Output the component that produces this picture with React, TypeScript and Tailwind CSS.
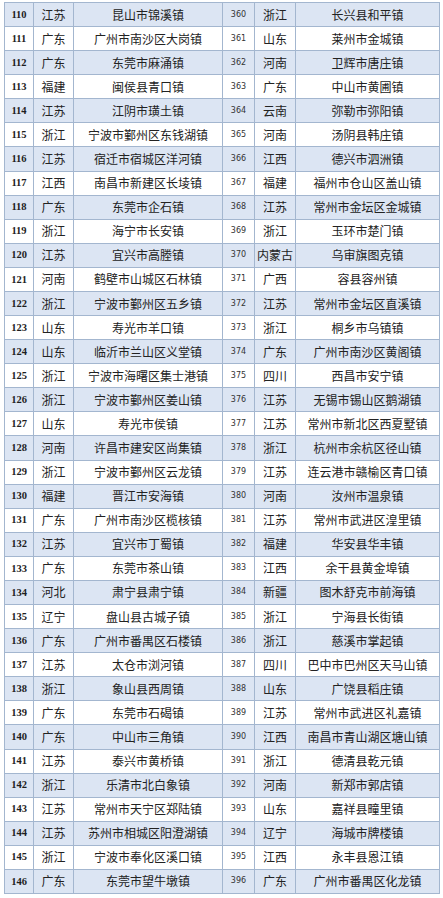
const LEFT: [string, string, string][] = [
  ["110", "江苏", "昆山市锦溪镇"],
  ["111", "广东", "广州市南沙区大岗镇"],
  ["112", "广东", "东莞市麻涌镇"],
  ["113", "福建", "闽侯县青口镇"],
  ["114", "江苏", "江阴市璜土镇"],
  ["115", "浙江", "宁波市鄞州区东钱湖镇"],
  ["116", "江苏", "宿迁市宿城区洋河镇"],
  ["117", "江西", "南昌市新建区长堎镇"],
  ["118", "广东", "东莞市企石镇"],
  ["119", "浙江", "海宁市长安镇"],
  ["120", "江苏", "宜兴市高塍镇"],
  ["121", "河南", "鹤壁市山城区石林镇"],
  ["122", "浙江", "宁波市鄞州区五乡镇"],
  ["123", "山东", "寿光市羊口镇"],
  ["124", "山东", "临沂市兰山区义堂镇"],
  ["125", "浙江", "宁波市海曙区集士港镇"],
  ["126", "浙江", "宁波市鄞州区姜山镇"],
  ["127", "山东", "寿光市侯镇"],
  ["128", "河南", "许昌市建安区尚集镇"],
  ["129", "浙江", "宁波市鄞州区云龙镇"],
  ["130", "福建", "晋江市安海镇"],
  ["131", "广东", "广州市南沙区榄核镇"],
  ["132", "江苏", "宜兴市丁蜀镇"],
  ["133", "广东", "东莞市茶山镇"],
  ["134", "河北", "肃宁县肃宁镇"],
  ["135", "辽宁", "盘山县古城子镇"],
  ["136", "广东", "广州市番禺区石楼镇"],
  ["137", "江苏", "太仓市浏河镇"],
  ["138", "浙江", "象山县西周镇"],
  ["139", "广东", "东莞市石碣镇"],
  ["140", "广东", "中山市三角镇"],
  ["141", "江苏", "泰兴市黄桥镇"],
  ["142", "浙江", "乐清市北白象镇"],
  ["143", "江苏", "常州市天宁区郑陆镇"],
  ["144", "江苏", "苏州市相城区阳澄湖镇"],
  ["145", "浙江", "宁波市奉化区溪口镇"],
  ["146", "广东", "东莞市望牛墩镇"],
];

const RIGHT: [string, string, string][] = [
  ["360", "浙江", "长兴县和平镇"],
  ["361", "山东", "莱州市金城镇"],
  ["362", "河南", "卫辉市唐庄镇"],
  ["363", "广东", "中山市黄圃镇"],
  ["364", "云南", "弥勒市弥阳镇"],
  ["365", "河南", "汤阴县韩庄镇"],
  ["366", "江西", "德兴市泗洲镇"],
  ["367", "福建", "福州市仓山区盖山镇"],
  ["368", "江苏", "常州市金坛区金城镇"],
  ["369", "浙江", "玉环市楚门镇"],
  ["370", "内蒙古", "乌审旗图克镇"],
  ["371", "广西", "容县容州镇"],
  ["372", "江苏", "常州市金坛区直溪镇"],
  ["373", "浙江", "桐乡市乌镇镇"],
  ["374", "广东", "广州市南沙区黄阁镇"],
  ["375", "四川", "西昌市安宁镇"],
  ["376", "江苏", "无锡市锡山区鹅湖镇"],
  ["377", "江苏", "常州市新北区西夏墅镇"],
  ["378", "浙江", "杭州市余杭区径山镇"],
  ["379", "江苏", "连云港市赣榆区青口镇"],
  ["380", "河南", "汝州市温泉镇"],
  ["381", "江苏", "常州市武进区湟里镇"],
  ["382", "福建", "华安县华丰镇"],
  ["383", "江西", "余干县黄金埠镇"],
  ["384", "新疆", "图木舒克市前海镇"],
  ["385", "浙江", "宁海县长街镇"],
  ["386", "浙江", "慈溪市掌起镇"],
  ["387", "四川", "巴中市巴州区天马山镇"],
  ["388", "山东", "广饶县稻庄镇"],
  ["389", "江苏", "常州市武进区礼嘉镇"],
  ["390", "江西", "南昌市青山湖区塘山镇"],
  ["391", "浙江", "德清县乾元镇"],
  ["392", "河南", "新郑市郭店镇"],
  ["393", "山东", "嘉祥县疃里镇"],
  ["394", "辽宁", "海城市牌楼镇"],
  ["395", "江西", "永丰县恩江镇"],
  ["396", "广东", "广州市番禺区化龙镇"],
];

const CJK = "font-['Noto_Sans_CJK_SC',sans-serif]";

export default function App() {
  return (
    <div className="min-h-[898px] bg-white pl-[4px] pt-[2px]">
      <div className="grid h-[892px] w-[436px] grid-cols-[28px_39px_148px_31px_40px_143px] grid-rows-[repeat(37,minmax(0,1fr))] gap-px bg-[#a3b6cf] p-px">
        {LEFT.map((l, i) => {
          const r = RIGHT[i];
          const bg = i % 2 === 0 ? "bg-[#dce5f3]" : "bg-white";
          const cell = `${bg} flex items-center justify-center overflow-hidden whitespace-nowrap`;
          return [
            <div key={`a${i}`} className={`${cell} font-['Liberation_Serif',serif] text-[10.5px] font-bold text-[#1e1e1e]`}>
              {l[0]}
            </div>,
            <div key={`b${i}`} className={`${cell} ${CJK} text-[12px] text-[#222]`}>
              {l[1]}
            </div>,
            <div key={`c${i}`} className={`${cell} ${CJK} text-[12px] text-[#222]`}>
              {l[2]}
            </div>,
            <div key={`d${i}`} className={`${cell} font-['DejaVu_Sans',sans-serif] text-[8px] text-[#333]`}>
              {r[0]}
            </div>,
            <div key={`e${i}`} className={`${cell} ${CJK} text-[12px] text-[#222]`}>
              {r[1]}
            </div>,
            <div key={`f${i}`} className={`${cell} ${CJK} text-[12px] text-[#222]`}>
              {r[2]}
            </div>,
          ];
        })}
      </div>
    </div>
  );
}
